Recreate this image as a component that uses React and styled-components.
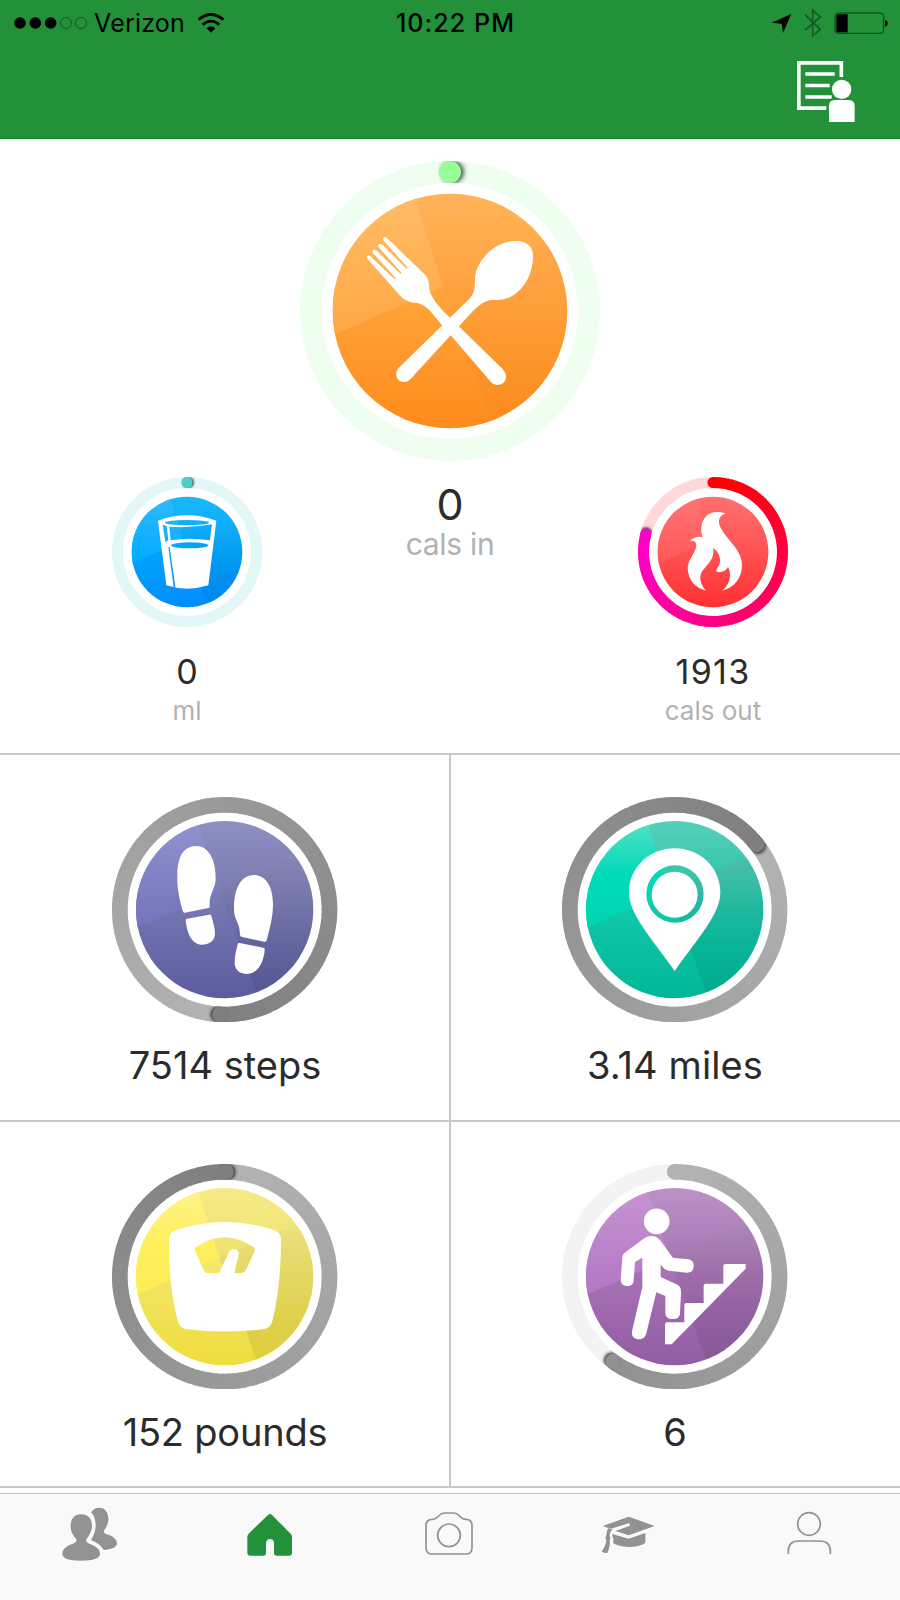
import { useId } from "react";
import styled, { createGlobalStyle } from "styled-components";

// point on a circle, 0deg is at the top and it goes clockwise
const polar = (r, deg) => {
  const a = ((deg - 90) * Math.PI) / 180;
  return [r * Math.cos(a), r * Math.sin(a)];
};

const mix = (from, to, t) =>
  `rgb(${from.map((c, i) => Math.round(c + (to[i] - c) * t)).join(",")})`;

const arc = (r, start, end) => {
  const [x1, y1] = polar(r, start);
  const [x2, y2] = polar(r, end);
  return `M${x1} ${y1} A${r} ${r} 0 0 1 ${x2} ${y2}`;
};

// progress ring made of small arcs, so the colour can change along the way
const Ring = ({ r, width, track, from, to, start = 0, end, startCap, id }) => {
  const mid = r - width / 2;
  const sweep = end - start;
  const count = Math.ceil(sweep / 3);
  const [hx, hy] = polar(mid, end);
  const [sx, sy] = polar(mid, end + (width * 7) / mid);
  const [tx, ty] = polar(mid, start);

  return (
    <>
      <mask id={`${id}ring`} maskUnits="userSpaceOnUse" x={-r} y={-r} width={r * 2} height={r * 2}>
        <circle r={mid} fill="none" stroke="#fff" strokeWidth={width} />
      </mask>
      <filter id={`${id}blur`} x="-50%" y="-50%" width="200%" height="200%">
        <feGaussianBlur stdDeviation={width / 9} />
      </filter>
      <circle r={mid} fill="none" stroke={track} strokeWidth={width} />
      {Array.from({ length: count }, (_, i) => {
        const a = start + (sweep * i) / count;
        const b = start + (sweep * (i + 1)) / count;
        return (
          <path
            key={i}
            d={arc(mid, a, i === count - 1 ? b : b + 0.6)}
            fill="none"
            stroke={mix(from, to, i / count)}
            strokeWidth={width}
          />
        );
      })}
      {startCap && <circle cx={tx} cy={ty} r={width / 2} fill={mix(from, to, 0)} />}
      <g mask={`url(#${id}ring)`}>
        <circle cx={sx} cy={sy} r={width / 2} fill="#222" opacity="0.85" filter={`url(#${id}blur)`} />
      </g>
      <circle cx={hx} cy={hy} r={width / 2} fill={mix(from, to, 1)} />
    </>
  );
};

// glossy disc with four facets
const Disc = ({ r, light, base, tint = "#888", shade = 0.14, dark = 0.07, id }) => (
  <g transform={`scale(${r / 100})`}>
    <linearGradient id={`${id}base`} x1="0" y1="0" x2="0" y2="1">
      {base.map((c, i) => (
        <stop key={i} offset={i / (base.length - 1)} stopColor={c} />
      ))}
    </linearGradient>
    <linearGradient id={`${id}light`} gradientUnits="userSpaceOnUse" x1="0" y1="-100" x2="0" y2="20">
      {light.map((c, i) => (
        <stop key={i} offset={i / (light.length - 1)} stopColor={c} />
      ))}
    </linearGradient>
    <linearGradient id={`${id}shade`} gradientUnits="userSpaceOnUse" x1="0" y1="-60" x2="0" y2="40">
      <stop offset="0" stopColor={tint} stopOpacity={shade * 1.5} />
      <stop offset="1" stopColor={tint} stopOpacity="0" />
    </linearGradient>
    <linearGradient id={`${id}dark`} gradientUnits="userSpaceOnUse" x1="0" y1="-60" x2="0" y2="40">
      <stop offset="0" stopColor="#000" stopOpacity="0" />
      <stop offset="1" stopColor="#000" stopOpacity={dark} />
    </linearGradient>
    <clipPath id={`${id}clip`}>
      <circle r="100" />
    </clipPath>
    <circle r="100" fill={`url(#${id}base)`} />
    <g clipPath={`url(#${id}clip)`}>
      <path d="M-6 -21 L-100 21 V-100 H-31Z" fill={`url(#${id}light)`} />
      <path d="M-6 -21 L-31 -100 H100 V-67Z" fill={tint} opacity={shade * 0.7} />
      <path d="M-6 -21 L100 -67 V100 H38Z" fill={`url(#${id}shade)`} />
      <path d="M-6 -21 L100 -67 V100 H38Z" fill={`url(#${id}dark)`} />
    </g>
  </g>
);

// everything in here is drawn at three units for one pixel
const Gauge = ({ r, ring, disc, center, children }) => {
  const id = useId().replace(/[^a-zA-Z0-9]/g, "");
  return (
    <GaugeSvg $size={(r * 2) / 3} viewBox={`${-r} ${-r} ${r * 2} ${r * 2}`}>
      <Ring r={r} id={id} {...ring} />
      <Disc id={id} {...disc} />
      <g transform={`translate(${-center[0]} ${-center[1]})`} fill="#fff" fillRule="evenodd">
        {children}
      </g>
    </GaugeSvg>
  );
};

const GREY_LIGHT = [179, 179, 179];
const GREY_DARK = [127, 127, 127];

const stats = [
  {
    name: "steps",
    text: "7514 steps",
    spacing: 0,
    center: [375, 387],
    ring: { start: -177.5, end: 182.5, from: GREY_LIGHT, to: GREY_DARK },
    disc: {
      light: ["#9192d0", "#7374ba"],
      base: ["#8f90c8", "#7476b2", "#5a5c9e"],
    },
    icon: (
      <>
        <path d="M233 285 C233 230 250 197 290 196 C325 196 349 235 348 295 C348 320 330 340 330 365 V378 Q330 381 326 382 L256 396 Q251 397 249 390 C241 360 232 330 233 285Z" />
        <path d="M258 420 Q257 415 262 414 L328 402 Q334 401 335 406 C340 425 346 440 346 460 C345 480 330 492 305 492 C275 490 262 455 258 420Z" />
        <path d="M403 385 C403 320 425 283 465 283 C500 285 520 320 520 370 C520 410 510 445 501 479 Q500 484 494 483 L427 469 Q421 468 421 462 C421 425 403 420 403 385Z" />
        <path d="M414 491 Q415 486 420 487 L490 501 Q496 502 495 508 C492 545 475 580 440 580 C415 578 405 565 405 545 C405 525 410 510 414 491Z" />
      </>
    ),
  },
  {
    name: "miles",
    text: "3.14 miles",
    spacing: 0.1,
    center: [375, 387],
    ring: { start: -308.5, end: 51.5, from: GREY_LIGHT, to: GREY_DARK },
    disc: {
      light: ["#55e0c6", "#00dab9", "#00d4b2"],
      base: ["#4fdcc0", "#10c8aa", "#00b797"],
      shade: 0.2,
    },
    icon: (
      <path d="M375 571 C300 465 238 400 238 335 C238 260 300 203 375 203 C450 203 512 260 512 335 C512 400 450 465 375 571Z M290 340 a86 86 0 1 0 172 0 a86 86 0 1 0 -172 0Z M306 342 a69 69 0 1 0 138 0 a69 69 0 1 0 -138 0Z" />
    ),
  },
  {
    name: "weight",
    text: "152 pounds",
    spacing: -0.2,
    center: [375, 377],
    ring: { start: -359.3, end: 0.7, from: GREY_LIGHT, to: GREY_DARK },
    disc: {
      light: ["#fff48c", "#ffef60", "#feec54"],
      base: ["#fdf189", "#f2e566", "#efdc3c"],
      shade: 0.08,
    },
    icon: (
      <path d="M208 262 Q209 243 232 236 Q375 190 520 236 Q543 243 544 262 Q545 400 518 510 Q512 533 490 535 Q375 548 262 535 Q240 533 234 510 Q206 400 208 262Z M286 300 Q283 294 288 289 Q375 228 462 289 Q468 294 465 300 L440 355 Q434 366 425 366 H404 L417 312 Q418 296 404 293 Q393 292 388 304 L358 366 H325 Q316 366 312 357Z" />
    ),
  },
  {
    name: "floors",
    text: "6",
    spacing: 0,
    center: [375, 377],
    ring: { end: 216, from: GREY_LIGHT, to: [144, 144, 144], startCap: true },
    disc: {
      light: ["#c694d2", "#b277c4"],
      base: ["#c193cf", "#a670b4", "#915da3"],
    },
    icon: (
      <>
        <circle cx="321" cy="211" r="38.5" />
        <path d="M305 255 C315 254 322 258 330 266 L370 320 L415 325 C428 327 433 335 432 346 C431 360 424 365 412 365 L358 359 C345 357 340 350 333 340 V378 L380 400 C392 405 394 412 394 425 L391 485 C391 497 383 504 369 504 C355 504 347 497 347 485 V435 L320 424 L291 543 C289 557 280 565 268 565 C253 564 245 555 247 541 L278 408 V320 L256 333 L252 387 C252 400 244 405 232 405 C220 404 213 397 213 386 L218 320 C219 312 221 308 228 303 L285 261 Q294 255 305 255Z" />
        <path d="M346 580 V521 Q346 514 353 514 H404 V463 Q404 456 411 456 H462 V405 Q462 398 469 398 H521 V346 Q521 339 528 339 H588 V353 L366 580Z" />
      </>
    ),
  },
];

const tabs = [
  {
    name: "friends",
    x: 180,
    icon: (
      <>
        <path d="M244 118 C265 118 276 132 276 152 C275 172 266 182 258 195 Q258 202 265 205 C285 213 300 220 300 237 C300 250 280 257 243 257 C207 257 187 250 187 237 C187 220 203 212 222 205 Q230 202 230 194 C220 182 212 172 212 152 C212 132 223 118 244 118Z" />
        <path d="M273 112 C280 102 288 98 297 98 C315 98 325 112 325 132 C325 148 318 158 311 168 Q311 174 318 177 C338 182 350 192 351 205 C351 218 333 224 311 225 C305 212 290 203 273 195 C282 180 288 165 287 148 C286 132 282 120 273 112Z" />
      </>
    ),
  },
  {
    name: "home",
    x: 720,
    active: true,
    icon: (
      <path d="M810 117 Q813 117 816 120 L872 176 Q876 180 876 186 V233 Q876 242 867 242 H831 Q822 242 822 233 V206 Q822 192 810 192 Q798 192 798 206 V233 Q798 242 789 242 H751 Q742 242 742 233 V186 Q742 180 746 176 L804 120 Q807 117 810 117Z" />
    ),
  },
  {
    name: "camera",
    x: 1261,
    icon: (
      <g fill="none" stroke="#929292" strokeWidth="5">
        <path d="M1279 218 V152 Q1279 133 1298 133 C1318 133 1316 114 1334 114 H1363 C1381 114 1378 133 1399 133 Q1417 133 1417 152 V218 Q1417 237 1398 237 H1298 Q1279 237 1279 218Z" />
        <circle cx="1348" cy="181" r="34" />
      </g>
    ),
  },
  {
    name: "learn",
    x: 450,
    icon: (
      <>
        <path d="M458 153 L536 125 L614 153 L536 181 L496 168 L540 152 L538 144 L488 160 L472 158Z" />
        <path d="M487 177 L536 191 L586 174 V203 Q572 215 536 216 Q504 215 489 204 Q493 190 487 185Z" />
        <path d="M469 180 Q469 168 475 160 L489 161 Q480 168 479 183 Q484 190 479 195 Q482 215 472 233 Q462 236 455 229 Q467 215 469 196 Q464 188 469 180Z" />
      </>
    ),
  },
  {
    name: "profile",
    x: 990,
    icon: (
      <g fill="none" stroke="#929292" strokeWidth="5">
        <circle cx="1077" cy="147" r="34" />
        <path d="M1015 237 V229 Q1015 198 1046 198 H1109 Q1141 198 1141 229 V237" />
      </g>
    ),
  },
];

const StatusBar = () => (
  <Status>
    <Carrier>
      <svg width="74" height="14" viewBox="42 44 222 42">
        <circle cx="60" cy="65" r="17.5" />
        <circle cx="106" cy="65" r="17.5" />
        <circle cx="152" cy="65" r="17.5" />
        <circle cx="198" cy="65" r="16.5" fill="none" stroke="#0a3c16" strokeWidth="2" />
        <circle cx="243" cy="65" r="16.5" fill="none" stroke="#0a3c16" strokeWidth="2" />
      </svg>
      <CarrierName>Verizon</CarrierName>
      <svg width="28" height="20" viewBox="592 35 84 60">
        <path d="M597 55 Q634 24 671 55" fill="none" stroke="#000" strokeWidth="8" />
        <path d="M609 70 Q634 49 659 70" fill="none" stroke="#000" strokeWidth="8" />
        <path d="M621 81 Q634 69 647 81 L634 94Z" />
      </svg>
    </Carrier>
    <Time>10:22 PM</Time>
    <Indicators>
      <svg width="117" height="30" viewBox="963 21 351 90">
        <path d="M1024 39 L965 65 L995 68 L999 96Z" />
        <path
          d="M1065 41 L1111 85 L1088 105 V28 L1111 48 L1065 88"
          fill="none"
          stroke="#125a26"
          strokeWidth="5"
        />
        <rect x="1155" y="36" width="146" height="61" rx="10" fill="none" stroke="#06290e" strokeWidth="2.5" />
        <path d="M1164 40 H1193 V94 H1164 Q1159 94 1159 89 V45 Q1159 40 1164 40Z" />
        <path d="M1305 57 Q1313 58 1313 67 Q1313 76 1305 77Z" />
      </svg>
    </Indicators>
  </Status>
);

const App = () => {
  return (
    <>
      <GlobalStyle />
      <Screen>
        <Header>
          <StatusBar />
          <Toolbar>
            <svg width="58" height="61" viewBox="1042 183 174 183">
              <g fill="none" stroke="#fff" strokeWidth="11">
                <path d="M1175 231 V188.5 H1047.5 V324.5 H1130" />
                <path d="M1067 222 H1155 M1067 256.5 H1140 M1067 291 H1146" />
              </g>
              <circle cx="1176" cy="268" r="29" fill="#fff" />
              <path d="M1138 366 V318 Q1138 300 1156 300 H1197 Q1215 300 1215 318 V366Z" fill="#fff" />
            </svg>
          </Toolbar>
        </Header>

        <Summary>
          <SideStat>
            <Gauge
              r={225}
              center={[292, 276]}
              ring={{ width: 33, track: "#e3f7f7", from: [72, 207, 203], to: [72, 207, 203], end: 0 }}
              disc={{
                r: 166,
                light: ["#30b8ff", "#00adff"],
                base: ["#16baff", "#00a4fc", "#008cff"],
                shade: 0.04,
                dark: 0.05,
              }}
            >
              <path d="M205 182 Q292 150 380 182 L356 376 Q292 396 230 376Z M226 188 a66 8 0 0 0 132 0 a66 8 0 0 0 -132 0Z M239 200 Q300 205 367 193 L361 241 Q300 232 243 241Z M219 194 L231 198 L236 241 L227 246Z M244 256 a56 9 0 0 0 112 0 a56 9 0 0 0 -112 0Z M236 262 H240 L257 381 H252Z" />
            </Gauge>
            <Value $size={34} $top={27.5}>0</Value>
            <Label $size={26} $top={9.5}>ml</Label>
          </SideStat>

          <MainStat>
            <Gauge
              r={450}
              center={[480, 483]}
              ring={{ width: 66, track: "#efffef", from: [152, 255, 152], to: [152, 255, 152], end: 0 }}
              disc={{
                r: 352,
                light: ["#ffbc66", "#ffa845"],
                base: ["#ffb85a", "#ffa136", "#ff8b1c"],
                tint: "#ff8a50",
                shade: 0.12,
                dark: 0.015,
              }}
            >
              <path d="M281 272 C275 262 287 258 293 266 L403 372 C417 386 417 400 418 418 C421 440 446 472 484 507 L638 657 C652 672 650 690 640 699 C628 708 612 706 603 696 L458 528 L425 488 C405 465 390 458 372 458 C350 456 335 444 324 430 L232 326 C227 318 236 313 243 320 L314 388 L317 385 L248 308 C244 300 254 296 261 303 L331 371 L334 368 L265 290 C261 282 272 278 279 286 L350 356 L353 353Z" />
              <path d="M729 320 C731 290 710 270 670 273 C600 278 556 345 555 385 C554 410 556 425 540 445 L325 655 C312 672 320 697 342 696 C355 695 360 690 370 678 L548 484 C570 462 590 448 612 450 C680 455 728 390 729 320Z" />
            </Gauge>
            <Value $size={43} $top={22}>0</Value>
            <Label $size={30} $top={3} $spacing={-0.3}>cals in</Label>
          </MainStat>

          <SideStat>
            <Gauge
              r={225}
              center={[338, 276]}
              ring={{
                width: 33,
                track: "#ffd9d9",
                from: [255, 0, 0],
                to: [255, 0, 208],
                end: 285,
                startCap: true,
              }}
              disc={{
                r: 166,
                light: ["#ff7474", "#ff5858"],
                base: ["#ff7070", "#ff5252", "#ff3030"],
                shade: 0,
                dark: 0,
              }}
            >
              <path d="M375 160 C330 145 300 170 303 215 C304 222 305 228 308 232 C295 228 280 232 269 243 C285 240 290 250 287 262 C284 280 262 300 262 325 C263 360 285 385 318 392 C300 375 295 350 305 335 C315 318 345 300 338 264 C352 272 360 290 359 302 C359 315 352 320 347 333 C355 340 378 335 383 320 C397 345 385 380 364 392 C400 385 425 355 425 315 C424 270 385 245 365 210 C352 190 350 172 375 160Z" />
            </Gauge>
            <Value $size={34} $top={27.5} $spacing={1.3}>1913</Value>
            <Label $size={26} $top={9.5}>cals out</Label>
          </SideStat>
        </Summary>

        <Stats>
          {stats.map((stat) => (
            <StatCell key={stat.name}>
              <Gauge
                r={338}
                center={stat.center}
                ring={{ width: 47, track: "#f3f3f3", ...stat.ring }}
                disc={{ r: 266, ...stat.disc }}
              >
                {stat.icon}
              </Gauge>
              <Value $size={38} $top={24.5} $spacing={stat.spacing}>{stat.text}</Value>
            </StatCell>
          ))}
        </Stats>

        <TabBar>
          {tabs.map((tab) => (
            <Tab key={tab.name} $active={tab.active} aria-label={tab.name}>
              <svg width="60" height="60" viewBox={`${tab.x} 90 180 180`}>
                {tab.icon}
              </svg>
            </Tab>
          ))}
        </TabBar>
      </Screen>
    </>
  );
};

export default App;

const GlobalStyle = createGlobalStyle`
  * {
    box-sizing: border-box;
  }
  body {
    margin: 0;
    background: #fff;
    font-family: Inter, "Liberation Sans", sans-serif;
  }
  svg {
    display: block;
    flex: none;
  }
`;

const Screen = styled.div`
  display: flex;
  flex-direction: column;
  width: 900px;
  height: 1600px;
  overflow: hidden;
`;

const Header = styled.header`
  height: 139px;
  background: #22913a;
  border-bottom: 1px solid #0b8620;
`;

const Status = styled.div`
  display: grid;
  grid-template-columns: 1fr auto 1fr;
  align-items: center;
  height: 45px;
  padding: 0 12px 0 14px;
  color: #000;
`;

const Carrier = styled.div`
  display: flex;
  align-items: center;
`;

const CarrierName = styled.span`
  margin: 1px 12px 0 6px;
  font-size: 25px;
  line-height: 30px;
  letter-spacing: 0.2px;
`;

const Time = styled.span`
  margin-top: 1px;
  padding-left: 9px;
  font-size: 25px;
  font-weight: 500;
  line-height: 30px;
  letter-spacing: 1.1px;
`;

const Indicators = styled.div`
  display: flex;
  justify-content: flex-end;
`;

const Toolbar = styled.div`
  display: flex;
  justify-content: flex-end;
  padding: 16px 45px 0 0;
`;

const Summary = styled.section`
  display: grid;
  grid-template-columns: 224px 302px 224px;
  justify-content: center;
  height: 614px;
  padding-top: 22px;
`;

const MainStat = styled.div`
  display: flex;
  flex-direction: column;
  align-items: center;
`;

const SideStat = styled(MainStat)`
  padding-top: 316px;
`;

const GaugeSvg = styled.svg`
  width: ${(p) => p.$size}px;
  height: ${(p) => p.$size}px;
`;

const Value = styled.div`
  margin-top: ${(p) => p.$top}px;
  font-size: ${(p) => p.$size}px;
  line-height: 1;
  letter-spacing: ${(p) => p.$spacing || 0}px;
  color: #2b2b2b;
  white-space: nowrap;
`;

const Label = styled(Value)`
  color: #b2b2b2;
`;

const Stats = styled.section`
  display: grid;
  grid-template-columns: 450px 450px;
  grid-template-rows: 367px 366px;
  border-bottom: 2px solid #c8c8c8;
`;

const StatCell = styled.div`
  display: flex;
  flex-direction: column;
  align-items: center;
  padding-top: 41.5px;
  border-top: 2px solid #c8c8c8;
  box-shadow: inset 1px 0 #c8c8c8;

  &:nth-child(odd) {
    box-shadow: inset -1px 0 #c8c8c8;
  }
`;

const TabBar = styled.nav`
  display: grid;
  grid-template-columns: repeat(5, 1fr);
  flex: 1;
  margin-top: 5px;
  padding-top: 11px;
  background: #f9f9f9;
  border-top: 1px solid #c4c4c4;
`;

const Tab = styled.div`
  display: flex;
  justify-content: center;
  align-items: flex-start;
  fill: ${(p) => (p.$active ? "#22913a" : "#929292")};
`;
